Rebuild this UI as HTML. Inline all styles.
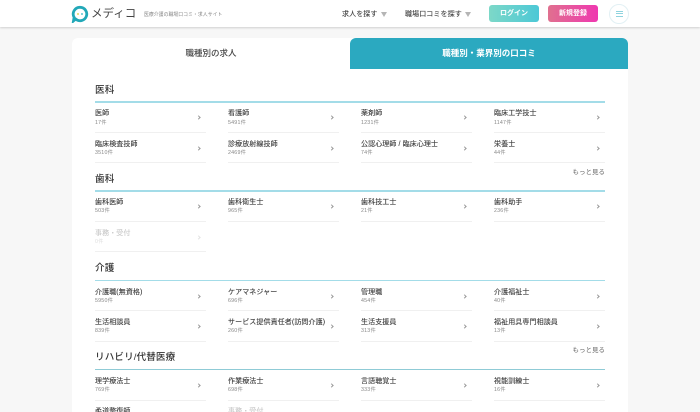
<!DOCTYPE html>
<html lang="ja"><head><meta charset="utf-8"><style>
html,body{margin:0;padding:0}
body{width:700px;height:412px;overflow:hidden;background:#f7f7f7;position:relative;font-family:"Liberation Sans","Noto Sans CJK JP",sans-serif;color:#333}
div,a,span{position:absolute;white-space:nowrap}
#w{left:0;top:0;width:700px;height:412px;overflow:hidden;filter:blur(.3px)}
.hd{left:0;top:0;width:700px;height:27px;background:#fff;box-shadow:0 1px 2px rgba(0,0,0,.16)}
.card{left:72px;top:38px;width:556px;height:374px;background:#fff;border-radius:6px 6px 0 0}
.tab{left:350px;top:38px;width:278px;height:31px;background:#2ba9c0;border-radius:6px 6px 0 0}
.t{font-size:9.6px;line-height:12px;height:12px;left:95px;color:#333;font-weight:500;margin-top:1px;letter-spacing:.1px}
.l{left:95px;width:510px;height:1px;background:#a3dce8}
.n{font-size:7px;line-height:10px;letter-spacing:.1px;color:#3a3a3a;margin-top:1px;-webkit-text-stroke:.12px #3a3a3a}
.c{font-size:5.3px;line-height:7px;letter-spacing:.2px;color:#888;margin-top:1px}
.b{width:111px;height:1px;background:#f0f0f0}
.a{width:2.200px;height:2.200px;margin:.4px;border-top:.6px solid #999;border-right:.6px solid #999;transform:rotate(45deg)}
.m{font-size:6.500px;line-height:9px;color:#666;right:95px}
.btn{top:5px;width:50px;height:17px;border-radius:3px;color:#fff;font-size:7px;font-weight:700;line-height:17px;text-align:center}
.tri{width:0;height:0;border-left:3px solid transparent;border-right:3px solid transparent;border-top:5px solid #b5b5b5}
.g{opacity:.28}
</style></head><body><div id="w">
<div class="hd"></div>
<svg style="position:absolute;left:71px;top:5px" width="18" height="18" viewBox="0 0 18 18"><path d="M9 2.300a6.700 6.700 0 1 1-4.300 11.800l-2.200 1.800.6-3.600A6.700 6.700 0 0 1 9 2.300z" fill="#fff" stroke="#22a8b8" stroke-width="2.800"/><circle cx="7" cy="9" r="1" fill="#e5d560"/><circle cx="11" cy="9" r="1" fill="#5bc6d0"/></svg>
<div style="left:91px;top:5px;font-size:11.500px;line-height:18px;color:#444">メディコ</div>
<div style="left:144px;top:12px;font-size:4.900px;line-height:8px;color:#888;margin-top:0">医療介護の職場口コミ・求人サイト</div>
<div class="n" style="left:342px;top:9px;color:#444">求人を探す</div><div class="tri" style="left:381px;top:12px"></div>
<div class="n" style="left:405px;top:9px;color:#444">職場口コミを探す</div><div class="tri" style="left:465px;top:12px"></div>
<div class="btn" style="left:489px;background:linear-gradient(90deg,#7dd8c8,#4cc8d6)">ログイン</div>
<div class="btn" style="left:548px;background:linear-gradient(90deg,#e0708f,#ef38b0)">新規登録</div>
<div style="left:609px;top:4px;width:18px;height:18px;border:1px solid #e2f0f4;border-radius:50%;background:#fff"></div>
<div style="left:616px;top:11px;width:7px;height:.8px;background:#8fd3de"></div><div style="left:616px;top:13.300px;width:7px;height:.8px;background:#8fd3de"></div><div style="left:616px;top:15.500px;width:7px;height:.8px;background:#8fd3de"></div>

<div class="card"></div>
<div style="left:72px;top:47px;width:278px;text-align:center;font-size:8.500px;line-height:12px;color:#444;font-weight:500">職種別の求人</div>
<div class="tab"></div>
<div style="left:350px;top:47px;width:278px;text-align:center;font-size:8.500px;line-height:12px;color:#fff;font-weight:700">職種別・業界別の口コミ</div>

<div class="t" style="top:84px">医科</div><div class="l" style="top:101px;height:1.500px"></div>
<div class="n" style="left:95px;top:108px">医師</div><div class="c" style="left:95px;top:119px">17件</div><div class="a" style="left:197px;top:116px"></div><div class="b" style="left:95px;top:132px"></div>
<div class="n" style="left:228px;top:108px">看護師</div><div class="c" style="left:228px;top:119px">5491件</div><div class="a" style="left:330px;top:116px"></div><div class="b" style="left:228px;top:132px"></div>
<div class="n" style="left:361px;top:108px">薬剤師</div><div class="c" style="left:361px;top:119px">1231件</div><div class="a" style="left:463px;top:116px"></div><div class="b" style="left:361px;top:132px"></div>
<div class="n" style="left:494px;top:108px">臨床工学技士</div><div class="c" style="left:494px;top:119px">1147件</div><div class="a" style="left:596px;top:116px"></div><div class="b" style="left:494px;top:132px"></div>
<div class="n" style="left:95px;top:139px">臨床検査技師</div><div class="c" style="left:95px;top:149px">3510件</div><div class="a" style="left:197px;top:147px"></div><div class="b" style="left:95px;top:162px"></div>
<div class="n" style="left:228px;top:139px">診療放射線技師</div><div class="c" style="left:228px;top:149px">2469件</div><div class="a" style="left:330px;top:147px"></div><div class="b" style="left:228px;top:162px"></div>
<div class="n" style="left:361px;top:139px">公認心理師 / 臨床心理士</div><div class="c" style="left:361px;top:149px">74件</div><div class="a" style="left:463px;top:147px"></div><div class="b" style="left:361px;top:162px"></div>
<div class="n" style="left:494px;top:139px">栄養士</div><div class="c" style="left:494px;top:149px">44件</div><div class="a" style="left:596px;top:147px"></div><div class="b" style="left:494px;top:162px"></div>
<div class="m" style="top:168px">もっと見る</div>

<div class="t" style="top:173px">歯科</div><div class="l" style="top:190px;height:1.500px"></div>
<div class="n" style="left:95px;top:197px">歯科医師</div><div class="c" style="left:95px;top:207px">503件</div><div class="a" style="left:197px;top:205px"></div><div class="b" style="left:95px;top:221px"></div>
<div class="n" style="left:228px;top:197px">歯科衛生士</div><div class="c" style="left:228px;top:207px">965件</div><div class="a" style="left:330px;top:205px"></div><div class="b" style="left:228px;top:221px"></div>
<div class="n" style="left:361px;top:197px">歯科技工士</div><div class="c" style="left:361px;top:207px">21件</div><div class="a" style="left:463px;top:205px"></div><div class="b" style="left:361px;top:221px"></div>
<div class="n" style="left:494px;top:197px">歯科助手</div><div class="c" style="left:494px;top:207px">236件</div><div class="a" style="left:596px;top:205px"></div><div class="b" style="left:494px;top:221px"></div>
<div class="n g" style="left:95px;top:228px">事務・受付</div><div class="c g" style="left:95px;top:238px">0件</div><div class="a g" style="left:197px;top:236px"></div><div class="b" style="left:95px;top:251px"></div>

<div class="t" style="top:262px">介護</div><div class="l" style="top:279.500px;height:1.500px"></div>
<div class="n" style="left:95px;top:287px">介護職(無資格)</div><div class="c" style="left:95px;top:297px">5950件</div><div class="a" style="left:197px;top:295px"></div><div class="b" style="left:95px;top:310px"></div>
<div class="n" style="left:228px;top:287px">ケアマネジャー</div><div class="c" style="left:228px;top:297px">696件</div><div class="a" style="left:330px;top:295px"></div><div class="b" style="left:228px;top:310px"></div>
<div class="n" style="left:361px;top:287px">管理職</div><div class="c" style="left:361px;top:297px">454件</div><div class="a" style="left:463px;top:295px"></div><div class="b" style="left:361px;top:310px"></div>
<div class="n" style="left:494px;top:287px">介護福祉士</div><div class="c" style="left:494px;top:297px">40件</div><div class="a" style="left:596px;top:295px"></div><div class="b" style="left:494px;top:310px"></div>
<div class="n" style="left:95px;top:317px">生活相談員</div><div class="c" style="left:95px;top:327px">839件</div><div class="a" style="left:197px;top:325px"></div><div class="b" style="left:95px;top:341px"></div>
<div class="n" style="left:228px;top:317px">サービス提供責任者(訪問介護)</div><div class="c" style="left:228px;top:327px">260件</div><div class="a" style="left:330px;top:325px"></div><div class="b" style="left:228px;top:341px"></div>
<div class="n" style="left:361px;top:317px">生活支援員</div><div class="c" style="left:361px;top:327px">313件</div><div class="a" style="left:463px;top:325px"></div><div class="b" style="left:361px;top:341px"></div>
<div class="n" style="left:494px;top:317px">福祉用具専門相談員</div><div class="c" style="left:494px;top:327px">13件</div><div class="a" style="left:596px;top:325px"></div><div class="b" style="left:494px;top:341px"></div>
<div class="m" style="top:346px">もっと見る</div>

<div class="t" style="top:351px">リハビリ/代替医療</div><div class="l" style="top:369px;background:#8fcbd6"></div>
<div class="n" style="left:95px;top:376px">理学療法士</div><div class="c" style="left:95px;top:386px">769件</div><div class="a" style="left:197px;top:384px"></div><div class="b" style="left:95px;top:400px"></div>
<div class="n" style="left:228px;top:376px">作業療法士</div><div class="c" style="left:228px;top:386px">698件</div><div class="a" style="left:330px;top:384px"></div><div class="b" style="left:228px;top:400px"></div>
<div class="n" style="left:361px;top:376px">言語聴覚士</div><div class="c" style="left:361px;top:386px">333件</div><div class="a" style="left:463px;top:384px"></div><div class="b" style="left:361px;top:400px"></div>
<div class="n" style="left:494px;top:376px">視能訓練士</div><div class="c" style="left:494px;top:386px">16件</div><div class="a" style="left:596px;top:384px"></div><div class="b" style="left:494px;top:400px"></div>
<div class="n" style="left:95px;top:406px">柔道整復師</div>
<div class="n g" style="left:228px;top:406px">事務・受付</div>
</div></body></html>
